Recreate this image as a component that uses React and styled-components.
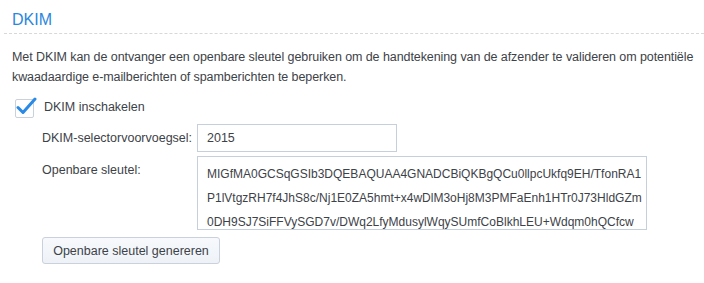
import React from 'react';
import styled, { createGlobalStyle } from 'styled-components';

const GlobalStyle = createGlobalStyle`
  html, body {
    margin: 0;
    padding: 0;
    background: #ffffff;
  }
  body {
    font-family: 'Liberation Sans', Arial, sans-serif;
    color: #3d4248;
  }
`;

const Panel = styled.div`
  width: 704px;
  height: 283px;
  box-sizing: border-box;
  padding: 0 0 0 4px;
`;

const Title = styled.h2`
  margin: 0;
  padding: 10px 0 0 8px;
  height: 23px;
  font-size: 16px;
  font-weight: normal;
  line-height: 19px;
  color: #2b87de;
  border-bottom: 1px dashed #d8d8d8;
`;

const Description = styled.p`
  margin: 0;
  padding: 13px 0 0 8px;
  font-size: 12.5px;
  letter-spacing: -0.08px;
  line-height: 20px;
`;

const CheckRow = styled.label`
  display: flex;
  align-items: center;
  gap: 10px;
  margin: 10px 0 0 11px;
  height: 20px;
  font-size: 12.5px;
`;

const CheckBox = styled.span`
  position: relative;
  width: 17px;
  height: 17px;
  border: 1px solid #c9d1da;
  border-radius: 2px;
  background: #fff;
  margin-top: 2px;
  svg {
    position: absolute;
    left: -1px;
    top: -5px;
  }
`;

const Fields = styled.div`
  display: grid;
  grid-template-columns: 155px auto;
  row-gap: 4px;
  margin: 7px 0 0 38px;
  font-size: 12.5px;
`;

const Label = styled.div`
  line-height: 28px;
  height: 28px;
  white-space: nowrap;
`;

const TextInput = styled.div`
  box-sizing: border-box;
  width: ${p => p.width}px;
  height: ${p => p.height}px;
  border: 1px solid #c6d0dc;
  padding: ${p => (p.multiline ? '5px 9px 0' : '0 9px')};
  line-height: ${p => (p.multiline ? '24px' : '26px')};
  font-size: ${p => (p.multiline ? '12px' : '12.5px')};
  color: #3d4248;
  background: #fff;
  white-space: pre;
  overflow: hidden;
`;

const Button = styled.button`
  margin: 7px 0 0 38px;
  width: 178px;
  height: 27px;
  border: 1px solid #c8d1dc;
  border-radius: 3px;
  background: linear-gradient(to bottom, #f7f9fc, #eef2f7);
  font-family: 'Liberation Sans', Arial, sans-serif;
  font-size: 12.5px;
  color: #3d4248;
  padding: 0;
`;

const keyLines = [
  'MIGfMA0GCSqGSIb3DQEBAQUAA4GNADCBiQKBgQCu0llpcUkfq9EH/TfonRA1',
  'P1lVtgzRH7f4JhS8c/Nj1E0ZA5hmt+x4wDlM3oHj8M3PMFaEnh1HTr0J73HldGZm',
  '0DH9SJ7SiFFVySGD7v/DWq2LfyMdusylWqySUmfCoBlkhLEU+Wdqm0hQCfcw',
];

export default function App() {
  return (
    <>
      <GlobalStyle />
      <Panel>
        <Title>DKIM</Title>
        <Description>
          Met DKIM kan de ontvanger een openbare sleutel gebruiken om de handtekening van de afzender te valideren om potentiële<br />
          kwaadaardige e-mailberichten of spamberichten te beperken.
        </Description>
        <CheckRow>
          <CheckBox>
            <svg width="22" height="22" viewBox="0 0 22 22">
              <path d="M3 12.5 L8 17.5 L20 4" fill="none" stroke="#2a8ae6" strokeWidth="3" strokeLinecap="round" strokeLinejoin="round" />
            </svg>
          </CheckBox>
          DKIM inschakelen
        </CheckRow>
        <Fields>
          <Label>DKIM-selectorvoorvoegsel:</Label>
          <TextInput width={200} height={28}>2015</TextInput>
          <Label>Openbare sleutel:</Label>
          <TextInput width={450} height={74} multiline>
            {keyLines.join('\n')}
          </TextInput>
        </Fields>
        <Button>Openbare sleutel genereren</Button>
      </Panel>
    </>
  );
}
